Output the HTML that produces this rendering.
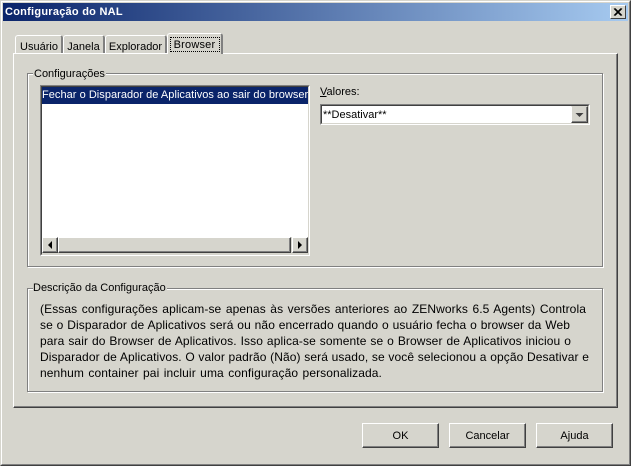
<!DOCTYPE html>
<html><head><meta charset="utf-8"><style>
html,body{margin:0;padding:0;background:#d6d5cd}
#w{position:relative;width:631px;height:466px;overflow:hidden;background:#d6d5cd;font:11px/13px "Liberation Sans",sans-serif;color:#000}
#w div{position:absolute;box-sizing:border-box}
.t{white-space:nowrap}
.btn{background:#d6d5cd;border:1px solid;border-color:#fff #404040 #404040 #fff;box-shadow:inset -1px -1px 0 #808080;text-align:center;font-size:11px;line-height:24px}
.tab{background:#d6d5cd;border-top:1px solid #fff;border-left:1px solid #fff;border-right:2px solid #808080;border-radius:3px 3px 0 0;text-align:center}
.sb{border:1px solid;border-color:#fff #404040 #404040 #fff;box-shadow:inset -1px -1px 0 #808080}
.d{left:40px;font-size:12px;line-height:16px;height:16px;letter-spacing:.1px;text-align:justify;text-align-last:justify}
</style></head><body><div id="w">
<div style="left:0;top:0;width:631px;height:466px;border:1px solid;border-color:#d6d5cd #404040 #404040 #d6d5cd"></div>
<div style="left:1px;top:1px;width:629px;height:464px;border:1px solid;border-color:#fff #808080 #808080 #fff"></div>
<div style="left:3px;top:3px;width:625px;height:18px;background:linear-gradient(90deg,#0a246a,#a6caf0)"></div>
<div class="t" style="left:5px;top:4px;font-weight:bold;font-size:11px;letter-spacing:.25px;line-height:16px;color:#fff">Configuração do NAL</div>
<div style="left:610px;top:5px;width:16px;height:14px;background:#d6d5cd;border:1px solid;border-color:#fff #404040 #404040 #fff"></div>
<svg style="position:absolute;left:612px;top:7px" width="12" height="10"><path d="M2 1.5L9 8.5M3 1.5L10 8.5M9 1.5L2 8.5M10 1.5L3 8.5" stroke="#000" stroke-width="1" fill="none"/></svg>

<div style="left:13px;top:53px;width:605px;height:355px;background:#d6d5cd;border:1px solid;border-color:#fff #404040 #404040 #fff;box-shadow:inset -1px -1px 0 #808080"></div>

<div class="tab" style="left:15px;top:35px;width:48px;height:18px;line-height:22px;padding-left:1px">Usuário</div>
<div class="tab" style="left:63px;top:35px;width:42px;height:18px;line-height:22px">Janela</div>
<div class="tab" style="left:105px;top:35px;width:62px;height:18px;line-height:22px">Explorador</div>
<div class="tab" style="left:167px;top:33px;width:56px;height:21px;line-height:22px;letter-spacing:.2px;z-index:2">Browser</div>
<div style="left:170px;top:37px;width:50px;height:15px;border:1px dotted #000;z-index:3"></div>

<div style="left:27px;top:73px;width:576px;height:194px;border:1px solid #808080;box-shadow:inset 1px 1px 0 #fff,1px 1px 0 #fff"></div>
<div class="t" style="left:33px;top:68px;background:#d6d5cd;padding:0 1px;height:13px;line-height:13px">Configurações</div>

<div style="left:40px;top:85px;width:270px;height:171px;background:#fff;border:1px solid;border-color:#808080 #fff #fff #808080"></div>
<div style="left:41px;top:86px;width:268px;height:169px;border:1px solid;border-color:#404040 #d6d5cd #d6d5cd #404040"></div>
<div class="t" style="left:42px;top:87px;width:266px;height:17px;background:#0a246a;color:#fff;line-height:17px;letter-spacing:.04px;overflow:hidden">Fechar o Disparador de Aplicativos ao sair do browser</div>

<div style="left:42px;top:237px;width:266px;height:17px;background:#d6d5cd"></div>
<div class="sb" style="left:42px;top:237px;width:16px;height:16px"></div>
<div class="sb" style="left:58px;top:237px;width:233px;height:16px"></div>
<div class="sb" style="left:292px;top:237px;width:16px;height:16px"></div>
<svg style="position:absolute;left:42px;top:237px" width="266" height="16"><path d="M10 4v8l-4-4z" fill="#000"/><path d="M256 4v8l4-4z" fill="#000"/></svg>

<div class="t" style="left:320px;top:86px;line-height:13px"><u>V</u>alores:</div>
<div style="left:320px;top:104px;width:270px;height:21px;background:#fff;border:1px solid;border-color:#808080 #fff #fff #808080"></div>
<div style="left:321px;top:105px;width:268px;height:19px;border:1px solid;border-color:#404040 #d6d5cd #d6d5cd #404040"></div>
<div class="t" style="left:323px;top:109px">**Desativar**</div>
<div style="left:571px;top:106px;width:17px;height:17px;background:#d6d5cd;border:1px solid;border-color:#d6d5cd #404040 #404040 #fff;box-shadow:inset -1px -1px 0 #808080"></div>
<svg style="position:absolute;left:571px;top:106px" width="17" height="17"><path d="M4.5 7h8l-4 4z" fill="#404040"/></svg>

<div style="left:27px;top:288px;width:576px;height:104px;border:1px solid #808080;box-shadow:inset 1px 1px 0 #fff,1px 1px 0 #fff"></div>
<div class="t" style="left:33px;top:282px;background:#d6d5cd;padding-right:1px;height:13px">Descrição da Configuração</div>
<div class="d" style="top:301px;width:546px">(Essas configurações aplicam-se apenas às versões anteriores ao ZENworks 6.5 Agents) Controla</div>
<div class="d" style="top:317px;width:530px">se o Disparador de Aplicativos será ou não encerrado quando o usuário fecha o browser da Web</div>
<div class="d" style="top:333px;width:531px">para sair do Browser de Aplicativos. Isso aplica-se somente se o Browser de Aplicativos iniciou o</div>
<div class="d" style="top:349px;width:549px">Disparador de Aplicativos. O valor padrão (Não) será usado, se você selecionou a opção Desativar e</div>
<div class="d" style="top:365px;width:342px">nenhum container pai incluir uma configuração personalizada.</div>

<div class="btn" style="left:362px;top:423px;width:77px;height:25px">OK</div>
<div class="btn" style="left:449px;top:423px;width:77px;height:25px">Cancelar</div>
<div class="btn" style="left:536px;top:423px;width:77px;height:25px">Ajuda</div>
</div></body></html>
